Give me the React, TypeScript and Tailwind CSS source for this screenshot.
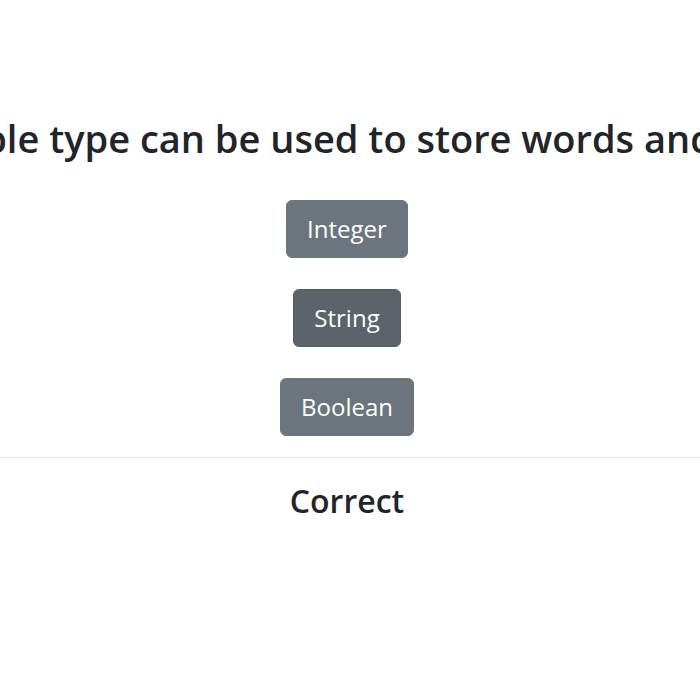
import React, { useState } from "react";

const options = ["Integer", "String", "Boolean"];

const App: React.FC = () => {
  const [selected, setSelected] = useState<string | null>("String");

  return (
    <div className="min-h-screen bg-white text-[#212529] font-['Open_Sans',sans-serif] overflow-hidden">
      <div className="pt-[115px] flex justify-center pr-[6px]">
        <h1 className="whitespace-nowrap text-[38px] leading-[46px] font-semibold">
          Which variable type can be used to store words and sentences?
        </h1>
      </div>
      <div className="mt-[39px] flex flex-col items-center gap-[31px] pr-[6px]">
        {options.map((opt) => (
          <button
            key={opt}
            onClick={() => setSelected(opt)}
            className={
              selected === opt
                ? "px-[20px] py-[10px] border border-[#565e64] bg-[#5c636a] text-white text-[24px] leading-[36px] rounded-[6px]"
                : "px-[20px] py-[10px] border border-[#6c757d] bg-[#6c757d] text-white text-[24px] leading-[36px] rounded-[6px]"
            }>
            {opt}
          </button>
        ))}
      </div>
      <hr className="mt-[21px] border-0 border-t border-[#e3e3e3]" />
      <h2 className="mt-[23px] text-center pr-[6px] text-[32px] leading-[40px] font-semibold">Correct</h2>
    </div>
  );
};

export default App;
